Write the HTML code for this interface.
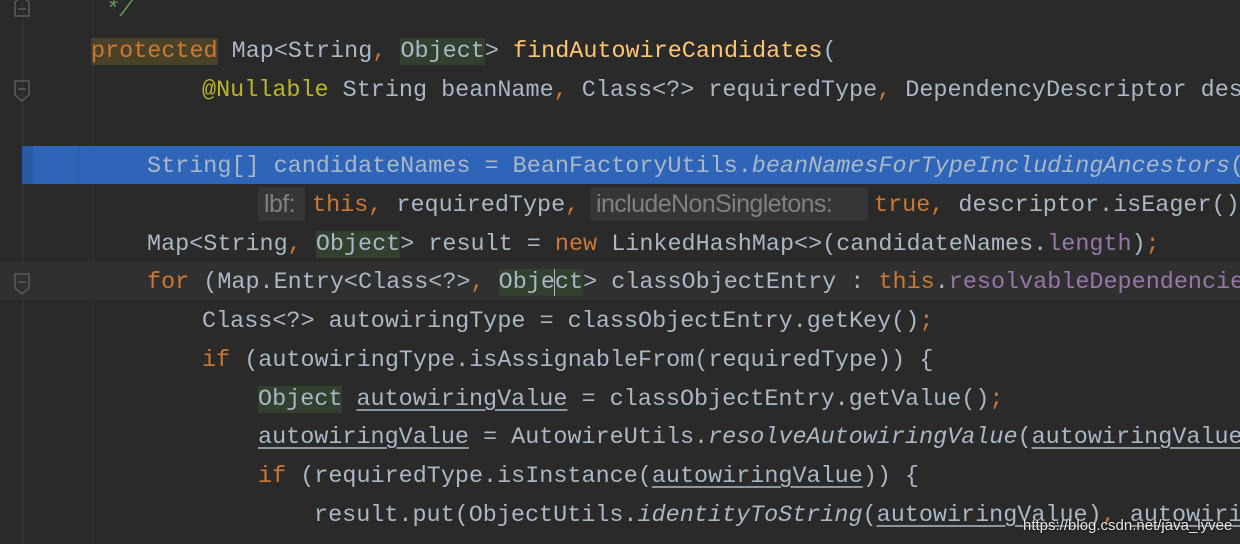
<!DOCTYPE html>
<html><head><meta charset="utf-8"><style>
html,body{margin:0;padding:0;overflow:hidden}
body{width:1240px;height:544px;overflow:hidden;background:#2a2a2a;position:relative;font-family:"Liberation Mono",monospace;font-size:23.45px;color:#a9b7c6}
#w{position:absolute;left:0;top:0;width:1240px;height:544px;overflow:hidden}
.l{position:absolute;left:0;height:38px;line-height:38px;white-space:pre}
.k{color:#cc7832}.a{color:#bbb529}.f{color:#ffc66d}.p{color:#9876aa}.c{color:#629755;font-style:italic}
.i{font-style:italic}.u{text-decoration:underline;text-decoration-color:#8a96a2;text-underline-offset:4px}
.ob{background:#34402f}.pb{background:#4a4228}
.h{position:absolute;height:34px;line-height:34px;background:#363636;color:#808080;font-family:"Liberation Sans",sans-serif;font-size:25px;letter-spacing:-0.6px;padding:0 0 0 6px;box-sizing:border-box;border-radius:3px;white-space:nowrap;overflow:hidden}
.vl{position:absolute;top:0;bottom:0;width:1px;background:#3a3a3a}
</style></head><body><div id="w">
<div class="vl" style="left:22px"></div>
<div class="vl" style="left:93px;background:#333"></div>
<div style="position:absolute;left:0;top:262px;width:1240px;height:38px;background:#303030"></div>
<div style="position:absolute;left:22px;top:146px;width:1218px;height:38px;background:#2f65b8"></div>
<div style="position:absolute;left:22px;top:146px;width:11px;height:38px;background:#2a5aa5"></div>
<div style="position:absolute;left:78px;top:146px;width:1px;height:38px;background:#2757a0"></div>

<svg style="position:absolute;left:12px;top:0" width="24" height="300">
<g fill="none" stroke="#5a5a5a" stroke-width="1.5">
<path d="M3 2 L10 -4 L17 2 V16 H3 Z"/><path d="M6 9 H14"/>
<path d="M3 81 H17 V95 L10 101 L3 95 Z"/><path d="M6 89 H14"/>
<path d="M3 274 H17 V288 L10 294 L3 288 Z"/><path d="M6 282 H14"/>
</g></svg>

<div class="l" style="top:-8px;left:91px"><span class="c"> */</span></div>
<div class="l" style="top:33px;left:91px"><span class="k pb">protected</span> Map&lt;String<span class="k">,</span> <span class="ob">Object</span>&gt; <span class="f">findAutowireCandidates</span>(</div>
<div class="l" style="top:72px;left:202px"><span class="a">@Nullable</span> String beanName<span class="k">,</span> Class&lt;?&gt; requiredType<span class="k">,</span> DependencyDescriptor descriptor) {</div>
<div class="l" style="top:148px;left:147px">String[] candidateNames = BeanFactoryUtils.<span class="i">beanNamesForTypeIncludingAncestors</span>(</div>
<div class="h" style="left:258px;top:187px;width:47px">lbf:</div>
<div class="l" style="top:187px;left:312px"><span class="k">this,</span> requiredType<span class="k">,</span></div>
<div class="h" style="left:590px;top:187px;width:278px">includeNonSingletons:</div>
<div class="l" style="top:187px;left:874px"><span class="k">true,</span> descriptor.isEager());</div>
<div class="l" style="top:226px;left:147px">Map&lt;String<span class="k">,</span> <span class="ob">Object</span>&gt; result = <span class="k">new</span> LinkedHashMap&lt;&gt;(candidateNames.<span class="p">length</span>)<span class="k">;</span></div>
<div class="l" style="top:264px;left:147px"><span class="k">for</span> (Map.Entry&lt;Class&lt;?&gt;<span class="k">,</span> <span class="ob">Obje<span style="border-left:1.5px solid #bbb;margin-left:-1px"></span>ct</span>&gt; classObjectEntry : <span class="k">this</span>.<span class="p">resolvableDependencies</span>.entrySet()) {</div>
<div class="l" style="top:303px;left:202px">Class&lt;?&gt; autowiringType = classObjectEntry.getKey()<span class="k">;</span></div>
<div class="l" style="top:342px;left:202px"><span class="k">if</span> (autowiringType.isAssignableFrom(requiredType)) {</div>
<div class="l" style="top:381px;left:258px"><span class="ob">Object</span> <span class="u">autowiringValue</span> = classObjectEntry.getValue()<span class="k">;</span></div>
<div class="l" style="top:419px;left:258px"><span class="u">autowiringValue</span> = AutowireUtils.<span class="i">resolveAutowiringValue</span>(<span class="u">autowiringValue</span>, requiredType);</div>
<div class="l" style="top:458px;left:258px"><span class="k">if</span> (requiredType.isInstance(<span class="u">autowiringValue</span>)) {</div>
<div class="l" style="top:497px;left:314px">result.put(ObjectUtils.<span class="i">identityToString</span>(<span class="u">autowiringValue</span>)<span class="k">,</span> <span class="u">autowiringValue</span>);</div>
<div style="position:absolute;left:1023px;top:517px;font-family:'Liberation Sans',sans-serif;font-size:15px;color:#e8e8e8;text-shadow:0 0 2px #000;white-space:nowrap">https://blog.csdn.net/java_lyvee</div>
</div></body></html>
